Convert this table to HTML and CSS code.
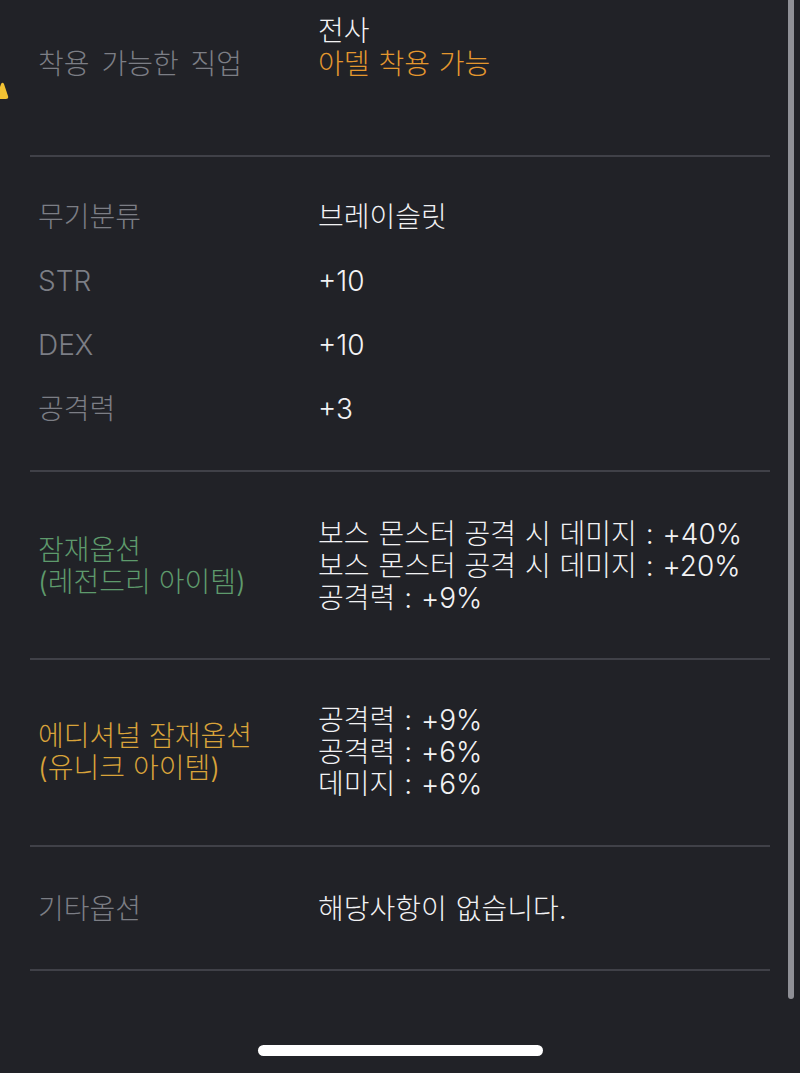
FILE: index.html
```html
<!DOCTYPE html>
<html lang="ko">
<head>
<meta charset="utf-8">
<link rel="stylesheet" href="styles.css">
</head>
<body>
<div class="page">
  <section class="sec sec-job">
    <div class="label">착용 가능한 직업</div>
    <div class="value">
      <div>전사</div>
      <div class="orange">아델 착용 가능</div>
      <div>&nbsp;</div>
    </div>
  </section>
  <section class="sec sec-stats">
    <div class="row"><div class="label">무기분류</div><div class="value">브레이슬릿</div></div>
    <div class="row"><div class="label">STR</div><div class="value">+10</div></div>
    <div class="row"><div class="label">DEX</div><div class="value">+10</div></div>
    <div class="row"><div class="label">공격력</div><div class="value">+3</div></div>
  </section>
  <section class="sec sec-multi sec-pot">
    <div class="label green">잠재옵션<br>(레전드리 아이템)</div>
    <div class="value">
      <div>보스 몬스터 공격 시 데미지 : +40%</div>
      <div>보스 몬스터 공격 시 데미지 : +20%</div>
      <div>공격력 : +9%</div>
    </div>
  </section>
  <section class="sec sec-multi sec-add">
    <div class="label gold">에디셔널 잠재옵션<br>(유니크 아이템)</div>
    <div class="value">
      <div>공격력 : +9%</div>
      <div>공격력 : +6%</div>
      <div>데미지 : +6%</div>
    </div>
  </section>
  <section class="sec sec-multi sec-etc">
    <div class="label">기타옵션</div>
    <div class="value">
      <div>해당사항이 없습니다.</div>
    </div>
  </section>
</div>
<svg class="edge-mark" width="10" height="20" viewBox="0 0 10 20"><path d="M2 2 Q3 1 4 3 L8 15 Q9 18 6 18 L-4 18 L1 3 Q1.5 2 2 2 Z" fill="#f2c233"/></svg>
<div class="scrollbar"></div>
<div class="home-indicator"></div>
</body>
</html>
```

FILE: styles.css
```css
html, body {
  margin: 0;
  padding: 0;
  background: #212227;
}
body {
  width: 800px;
  height: 1073px;
  overflow: hidden;
  position: relative;
  font-family: "Inter", "Noto Sans CJK KR", sans-serif;
  font-weight: 300;
  font-size: 28px;
  color: #f2f2f4;
}
.page {
  margin-left: 30px;
  width: 740px;
}
.sec {
  display: grid;
  grid-template-columns: 288px 1fr;
  align-items: center;
  border-bottom: 2px solid #404148;
  line-height: 32px;
}
.label {
  padding-left: 8px;
  color: #7c7e85;
  word-spacing: 4px;
}
.value {
  word-spacing: 1px;
}
.sec-job {
  padding: 15px 0 41px;
  line-height: 33px;
}
.sec-stats {
  display: flex;
  flex-direction: column;
  align-items: stretch;
  padding: 28px 0 29px;
}
.row {
  display: grid;
  grid-template-columns: 288px 1fr;
  align-items: center;
  height: 64px;
}
.sec-pot {
  padding: 46px 0 44px;
}
.sec-add {
  padding: 44px 0 45px;
}
.sec-etc {
  padding: 46px 0 44px;
}
.orange { color: #e4972e; }
.green { color: #5e9a6c; word-spacing: 0; }
.gold { color: #d9a33a; word-spacing: 0; }
.edge-mark {
  position: absolute;
  left: 0;
  top: 81px;
}
.scrollbar {
  position: absolute;
  left: 788px;
  top: 0;
  width: 6px;
  height: 999px;
  border-radius: 0 0 3px 3px;
  background: #8f9096;
}
.home-indicator {
  position: absolute;
  left: 258px;
  top: 1045px;
  width: 285px;
  height: 11px;
  border-radius: 6px;
  background: #ffffff;
}
```
